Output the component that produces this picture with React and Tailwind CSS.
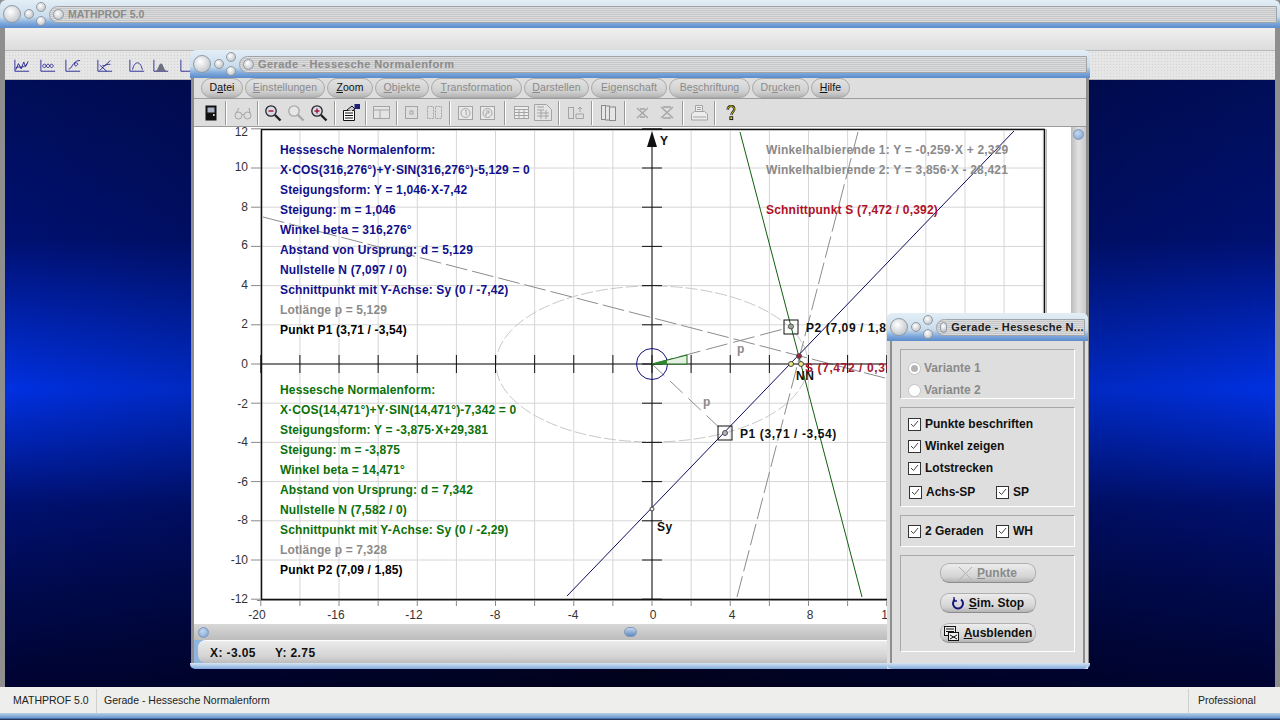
import React from 'react';

const font = "font-['Liberation_Sans',Arial,sans-serif]";

const list1 = [
  ['Hessesche Normalenform:', 'text-[#10108c]'],
  ['X·COS(316,276°)+Y·SIN(316,276°)-5,129 = 0', 'text-[#10108c]'],
  ['Steigungsform: Y = 1,046·X-7,42', 'text-[#10108c]'],
  ['Steigung: m = 1,046', 'text-[#10108c]'],
  ['Winkel beta = 316,276°', 'text-[#10108c]'],
  ['Abstand von Ursprung: d = 5,129', 'text-[#10108c]'],
  ['Nullstelle N (7,097 / 0)', 'text-[#10108c]'],
  ['Schnittpunkt mit Y-Achse: Sy (0 / -7,42)', 'text-[#10108c]'],
  ['Lotlänge p = 5,129', 'text-[#8a8a8a]'],
  ['Punkt P1 (3,71 / -3,54)', 'text-black'],
];

const list2 = [
  ['Hessesche Normalenform:', 'text-[#0a700a]'],
  ['X·COS(14,471°)+Y·SIN(14,471°)-7,342 = 0', 'text-[#0a700a]'],
  ['Steigungsform: Y = -3,875·X+29,381', 'text-[#0a700a]'],
  ['Steigung: m = -3,875', 'text-[#0a700a]'],
  ['Winkel beta = 14,471°', 'text-[#0a700a]'],
  ['Abstand von Ursprung: d = 7,342', 'text-[#0a700a]'],
  ['Nullstelle N (7,582 / 0)', 'text-[#0a700a]'],
  ['Schnittpunkt mit Y-Achse: Sy (0 / -2,29)', 'text-[#0a700a]'],
  ['Lotlänge p = 7,328', 'text-[#8a8a8a]'],
  ['Punkt P2 (7,09 / 1,85)', 'text-black'],
];

const menus = [
  { pre: 'D', u: 'a', post: 'tei', w: 'w-[42px]', on: true },
  { pre: '', u: 'E', post: 'instellungen', w: 'w-[80px]' },
  { pre: '', u: 'Z', post: 'oom', w: 'w-[46px]', on: true },
  { pre: '', u: 'O', post: 'bjekte', w: 'w-[54px]' },
  { pre: '', u: 'T', post: 'ransformation', w: 'w-[91px]' },
  { pre: '', u: 'D', post: 'arstellen', w: 'w-[65px]' },
  { pre: 'Ei', u: 'g', post: 'enschaft', w: 'w-[76px]' },
  { pre: 'Be', u: 's', post: 'chriftung', w: 'w-[81px]' },
  { pre: 'Dr', u: 'u', post: 'cken', w: 'w-[57px]' },
  { pre: '', u: 'H', post: 'ilfe', w: 'w-[39px]', on: true },
];

function Dot({ size }) {
  return <div className={`${size} rounded-full border border-[#8f9aa6] bg-[radial-gradient(circle_at_40%_35%,#ffffff,#c9ccd0_70%,#a8acb2)]`} />;
}

function TitleBar({ title, textClass }) {
  return (
    <div className="h-[28px] shrink-0 flex items-center pl-[3px] pr-[3px] rounded-t-[6px] bg-[linear-gradient(to_bottom,#e3eef6_0,#c9dcec_60%,#7fa9dc_82%,#5b8bcb_100%)]">
      <Dot size="w-[18px] h-[18px]" />
      <div className="ml-[3px] w-[10px] flex justify-center"><Dot size="w-[10px] h-[10px]" /></div>
      <div className="ml-[2px] flex flex-col gap-[4px]">
        <Dot size="w-[10px] h-[10px]" />
        <Dot size="w-[10px] h-[10px]" />
      </div>
      <div className="ml-[3px] flex-1 min-w-0 h-[17px] rounded-l-[9px] flex items-center pl-[3px] border border-[#a0a4a8] bg-[repeating-linear-gradient(to_bottom,#dcdcdc_0,#dcdcdc_1px,#c4c6c8_1px,#c4c6c8_2px)]">
        <Dot size="w-[11px] h-[11px]" />
        <span className={`ml-[4px] leading-none font-bold whitespace-nowrap ${textClass}`}>{title}</span>
      </div>
    </div>
  );
}

function Sep({ w }) {
  return (
    <div className={`${w} h-[24px] flex justify-center`}>
      <div className="w-[1px] bg-[#9a9a9a]" />
      <div className="w-[1px] bg-white" />
    </div>
  );
}

function Slot({ w, children }) {
  return <div className={`${w} h-[24px] flex items-center justify-center`}>{children}</div>;
}

function Magnifier({ sign, dim }) {
  const c = dim ? '#a8a8a8' : '#222';
  return (
    <svg width="18" height="18" viewBox="0 0 18 18" fill="none">
      <circle cx="7" cy="7" r="5.2" stroke={c} strokeWidth="1.3" fill={dim ? '#e6e6e6' : '#d9d9e8'} />
      <path d="M11 11l5.5 5.5" stroke={c} strokeWidth="2.4" />
      {sign !== 'none' && <path d="M4.5 7h5" stroke="#a01030" strokeWidth="1.4" />}
      {sign === 'plus' && <path d="M7 4.5v5" stroke="#a01030" strokeWidth="1.4" />}
    </svg>
  );
}

function Toolbar() {
  const g = '#a4a4a4';
  return (
    <div className="h-[29px] shrink-0 flex items-center pl-[6px] bg-[#dedede] border-y border-[#9c9c9c]">
      <Slot w="w-[22px]">
        <svg width="12" height="16" viewBox="0 0 12 16"><rect x="0.5" y="0.5" width="11" height="15" fill="#111" /><rect x="2.5" y="2.5" width="7" height="5" fill="#aab2c6" /><rect x="8" y="9" width="1.6" height="2" fill="#ddd" /></svg>
      </Slot>
      <Sep w="w-[8px]" />
      <Slot w="w-[26px]">
        <svg width="18" height="14" viewBox="0 0 18 14" fill="none" stroke={g}><ellipse cx="4.5" cy="9.5" rx="3.5" ry="3.5" /><ellipse cx="13.5" cy="9.5" rx="3.5" ry="3.5" /><path d="M8 9c.6-.8 1.4-.8 2 0M2 7L5 2M16 7l-1-5" /></svg>
      </Slot>
      <Sep w="w-[4px]" />
      <Slot w="w-[26px]"><Magnifier sign="minus" /></Slot>
      <Slot w="w-[20px]"><Magnifier sign="none" dim /></Slot>
      <Slot w="w-[26px]"><Magnifier sign="plus" /></Slot>
      <Sep w="w-[6px]" />
      <Slot w="w-[26px]">
        <svg width="18" height="17" viewBox="0 0 18 17" fill="none" stroke="#111"><path d="M1.5 6.5h11v10h-11z" fill="#fff" /><path d="M3 9h8M3 11.5h8M3 14h8" /><path d="M5 6l5-4 3 3-3 2" fill="#ccc" /><rect x="13" y="0.5" width="4.5" height="4" fill="#20207a" stroke="#20207a" /></svg>
      </Slot>
      <Sep w="w-[4px]" />
      <Slot w="w-[26px]">
        <svg width="17" height="13" viewBox="0 0 17 13" fill="#e4e4e4" stroke={g}><rect x="0.5" y="0.5" width="16" height="12" /><path d="M0.5 4h16M7 4v8.5" /></svg>
      </Slot>
      <Sep w="w-[6px]" />
      <Slot w="w-[22px]">
        <svg width="13" height="13" viewBox="0 0 13 13" fill="none" stroke={g}><rect x="0.5" y="0.5" width="12" height="12" /><rect x="5" y="5" width="3" height="3" /></svg>
      </Slot>
      <Slot w="w-[24px]">
        <svg width="15" height="13" viewBox="0 0 15 13" fill="none" stroke={g}><rect x="0.5" y="0.5" width="6" height="12" strokeDasharray="2 1" /><rect x="8.5" y="0.5" width="6" height="12" strokeDasharray="2 1" /></svg>
      </Slot>
      <Sep w="w-[8px]" />
      <Slot w="w-[23px]">
        <svg width="15" height="14" viewBox="0 0 15 14" fill="#e8e8e8" stroke={g}><rect x="0.5" y="0.5" width="14" height="13" /><circle cx="7.5" cy="7" r="4.5" /><path d="M7 4.5h1.2v5" fill="none" /></svg>
      </Slot>
      <Slot w="w-[20px]">
        <svg width="15" height="14" viewBox="0 0 15 14" fill="#e8e8e8" stroke={g}><rect x="0.5" y="0.5" width="14" height="13" /><circle cx="7.5" cy="7" r="4.5" /><path d="M6 5h3v2H6v3" fill="none" /></svg>
      </Slot>
      <Sep w="w-[16px]" />
      <Slot w="w-[16px]">
        <svg width="15" height="13" viewBox="0 0 15 13" fill="#eee" stroke={g}><rect x="0.5" y="0.5" width="14" height="12" /><path d="M0.5 3.5h14M0.5 6.5h14M0.5 9.5h14M5 3.5v9M10 3.5v9" /></svg>
      </Slot>
      <Slot w="w-[28px]">
        <svg width="18" height="17" viewBox="0 0 18 17" fill="#e4e4e4" stroke={g}><path d="M0.5 0.5h12l5 5v11H.5z" /><path d="M3 3h7M3 6h7M3 9h12M3 12h12M7 6v9M12 6v9" /></svg>
      </Slot>
      <Sep w="w-[4px]" />
      <Slot w="w-[30px]">
        <svg width="16" height="13" viewBox="0 0 16 13" fill="none" stroke={g}><rect x="0.5" y="1.5" width="5" height="11" /><path d="M8 8h7.5v4.5H8zM12 1v5M10 3l2-2 2 2" /></svg>
      </Slot>
      <Sep w="w-[2px]" />
      <Slot w="w-[30px]">
        <svg width="15" height="16" viewBox="0 0 15 16" fill="#e6e6e6" stroke="#8a8a8a"><rect x="0.5" y="0.5" width="4" height="14" /><rect x="4.5" y="1" width="4" height="14" /><rect x="8.5" y="2" width="6" height="13.5" /></svg>
      </Slot>
      <Sep w="w-[4px]" />
      <Slot w="w-[30px]">
        <svg width="13" height="12" viewBox="0 0 13 12" fill="none" stroke={g} strokeWidth="1.3"><path d="M1 1l11 10M12 1L1 11M4 2l5 0M4 10l5 0" /></svg>
      </Slot>
      <Slot w="w-[20px]">
        <svg width="14" height="13" viewBox="0 0 14 13" fill="none" stroke={g} strokeWidth="1.3"><path d="M1 1l12 11M13 1L1 12M3 1h8M3 12h8" /></svg>
      </Slot>
      <Sep w="w-[12px]" />
      <Slot w="w-[20px]">
        <svg width="17" height="16" viewBox="0 0 17 16" fill="#ececec" stroke={g}><path d="M4.5.5h7v6h-7zM.5 9l3-2.500h10l3 2.500v6h-16z" /><path d="M6 2.500h4M6 4.500h4M2 12h13" /></svg>
      </Slot>
      <Sep w="w-[12px]" />
      <Slot w="w-[20px]">
        <svg width="10" height="16" viewBox="0 0 10 17" fill="none"><path d="M1.500 5C1.500 2.500 3 1 5 1s3.500 1.500 3.500 3.500c0 2.500-3 3-3 6" stroke="#111" strokeWidth="2.400" /><path d="M1.500 5C1.500 2.500 3 1 5 1s3.500 1.500 3.500 3.500c0 2.500-3 3-3 6" stroke="#e8e020" strokeWidth="1" /><rect x="3.800" y="12.500" width="3" height="3" fill="#e8e020" stroke="#111" /></svg>
      </Slot>
    </div>
  );
}

function Chart() {
  const vx = [];
  for (let i = -20; i <= 20; i += 2) vx.push(653 + i * 19.56);
  const hy = [];
  for (let i = -12; i <= 12; i += 2) hy.push(364 - i * 19.6);
  const yLabels = [
    ['12', 136], ['10', 171], ['8', 211], ['6', 249], ['4', 289], ['2', 328], ['0', 368],
    ['-2', 408], ['-4', 446], ['-6', 486], ['-8', 524], ['-10', 564], ['-12', 603],
  ];
  const xLabels = [['-20', 258], ['-16', 337], ['-12', 415], ['-8', 496], ['-4', 574], ['0', 654], ['4', 733], ['8', 811], ['12', 889]];
  return (
    <div className="relative flex-1 min-w-0 bg-white overflow-hidden">
      <svg width="876" height="500" viewBox="195 127 876 500" className="block">
        {vx.map((x, i) => <line key={i} x1={x} y1="131" x2={x} y2="599" stroke="#d6d6d6" />)}
        {hy.map((y, i) => <line key={i} x1="262" y1={y} x2="1045" y2={y} stroke="#d6d6d6" />)}
        <path d="M262.500 129.500H1045.500V599.500H262.500Z" fill="none" stroke="#111" strokeWidth="1.500" />
        <path d="M1047.500 129V600" stroke="#bbb" />
        <path d="M258 600.500H1046" stroke="#888" />
        {vx.map((x, i) => <line key={i} x1={x} y1="600" x2={x} y2="606" stroke="#888" />)}
        {hy.map((y, i) => <line key={i} x1="252" y1={y} x2="262" y2={y} stroke="#888" />)}

        <ellipse cx="653" cy="364" rx="156" ry="78" fill="none" stroke="#c8c8c8" strokeDasharray="12 3" />
        <line x1="264" y1="217" x2="886" y2="378" stroke="#8c8c8c" strokeDasharray="22 5" />
        <line x1="859" y1="132" x2="738" y2="597" stroke="#8c8c8c" strokeDasharray="22 5" />
        <line x1="653" y1="364" x2="792" y2="327" stroke="#8c8c8c" strokeDasharray="22 6" />
        <line x1="653" y1="364" x2="726" y2="433" stroke="#8c8c8c" strokeDasharray="17 8" />

        <line x1="262" y1="364" x2="1045" y2="364" stroke="#111" />
        <line x1="653" y1="140" x2="653" y2="600" stroke="#111" />
        <path d="M653 131l5 16h-10z" fill="#111" />
        {hy.map((y, i) => <line key={i} x1="643" y1={y} x2="663" y2={y} stroke="#111" />)}
        {vx.map((x, i) => <line key={i} x1={x} y1="355" x2={x} y2="373" stroke="#111" />)}

        <line x1="568" y1="596" x2="1015" y2="131" stroke="#0a0a60" />
        <line x1="741" y1="132" x2="863" y2="597" stroke="#0f5f0f" />

        <circle cx="653" cy="364" r="15.500" fill="none" stroke="#14147e" />
        <path d="M653 364L688 355V364Z" fill="#e4f0e0" stroke="#1a6a1a" />
        <path d="M653 364L668 360V364Z" fill="#2b8a2b" />

        <rect x="785" y="320" width="14" height="14" fill="none" stroke="#111" />
        <circle cx="792" cy="326.500" r="2.500" fill="#9aa69a" stroke="#555" />
        <rect x="719" y="426" width="14" height="14" fill="none" stroke="#111" />
        <circle cx="726" cy="433" r="2.500" fill="#b0b0c0" stroke="#555" />
        <circle cx="800" cy="356" r="2.500" fill="#a02040" stroke="#555" />
        <circle cx="792" cy="364" r="2.500" fill="#f0e880" stroke="#444" />
        <circle cx="802" cy="364" r="2.500" fill="#f0e880" stroke="#444" />
        <circle cx="653" cy="509" r="2" fill="#eee" stroke="#444" />

        <g fontFamily="'Liberation Sans',Arial,sans-serif" fontSize="12" fill="#333">
          {yLabels.map(([t, y]) => <text key={t} x="249" y={y} textAnchor="end">{t}</text>)}
          {xLabels.map(([t, x]) => <text key={t} x={x} y="619" textAnchor="middle">{t}</text>)}
        </g>
        <g fontFamily="'Liberation Sans',Arial,sans-serif" fontSize="12" fontWeight="700" letterSpacing="0.600">
          <text x="661" y="145" fill="#111">Y</text>
          <text x="807" y="332" fill="#111">P2 (7,09 / 1,85)</text>
          <text x="741" y="438" fill="#111">P1 (3,71 / -3,54)</text>
          <text x="797" y="380" fill="#111">NN</text>
          <text x="658" y="531" fill="#111">Sy</text>
          <text x="806" y="372" fill="#a81830">S (7,472 / 0,392)</text>
          <text x="738" y="353" fill="#8a8a8a">p</text>
          <text x="704" y="406" fill="#8a8a8a">p</text>
        </g>
      </svg>
      <InfoList items={list1} className="top-[13px] left-[86px]" />
      <InfoList items={list2} className="top-[253px] left-[86px]" />
      <div className="absolute top-[13px] left-[572px] flex flex-col text-[12px] leading-[20px] font-bold tracking-[0.2px] whitespace-nowrap">
        <span className="text-[#8a8a8a]">Winkelhalbierende 1: Y = -0,259·X + 2,329</span>
        <span className="text-[#8a8a8a]">Winkelhalbierende 2: Y = 3,856·X - 28,421</span>
        <span className="mt-[20px] text-[#b01028]">Schnittpunkt S (7,472 / 0,392)</span>
      </div>
    </div>
  );
}

function InfoList({ items, className }) {
  return (
    <div className={`absolute ${className} flex flex-col text-[12px] leading-[20px] font-bold tracking-[0.15px] whitespace-nowrap`}>
      {items.map(([t, c], i) => <span key={i} className={c}>{t}</span>)}
    </div>
  );
}

function Check({ label, className = '' }) {
  return (
    <div className={`flex items-center h-[22px] ${className}`}>
      <div className="w-[13px] h-[13px] border border-[#333] bg-white flex items-center justify-center shrink-0">
        <svg width="9" height="8" viewBox="0 0 9 8" fill="none"><path d="M1 4l2.500 2.500L8 1" stroke="#444" /></svg>
      </div>
      <span className="ml-[4px] text-[12px] font-bold text-[#111] whitespace-nowrap">{label}</span>
    </div>
  );
}

function Radio({ label, checked }) {
  return (
    <div className="flex items-center h-[22px]">
      <div className="w-[13px] h-[13px] rounded-full border border-[#c4c4c4] bg-white flex items-center justify-center">
        {checked && <div className="w-[7px] h-[7px] rounded-full bg-[#b4b4b4]" />}
      </div>
      <span className="ml-[3px] text-[12px] font-bold text-[#8a8a8a]">{label}</span>
    </div>
  );
}

function Group({ className, children }) {
  return <div className={`border border-[#a8a8a8] border-r-white border-b-white pl-[7px] ${className}`}>{children}</div>;
}

function PillButton({ icon, pre, u, dim }) {
  return (
    <div className="w-[96px] h-[20px] rounded-[9px] border border-[#b0b0b0] border-b-[#8c8c8c] flex items-center justify-center bg-[linear-gradient(to_bottom,#ececec,#d4d4d4_70%,#b4b4b4)]">
      {icon}
      <span className={`ml-[4px] text-[12px] font-bold ${dim ? 'text-[#8a8a8a]' : 'text-[#111]'}`}>
        <span className="underline">{pre}</span>{u}
      </span>
    </div>
  );
}

function SmallWindow() {
  return (
    <div className={`absolute left-[887px] top-[313px] w-[201px] h-[356px] flex flex-col bg-[#dedede] rounded-t-[6px] ${font}`}>
      <TitleBar title="Gerade - Hessesche N..." textClass="text-[11px] text-[#1c1c1c] tracking-[0.32px]" />
      <div className="flex-1 min-h-0 mx-[3px] px-[8px] pt-[8px] flex flex-col gap-[8px] border-x-[2px] border-[#8e8e8e] bg-[#dedede]">
        <Group className="h-[50px] pt-[7px]">
          <Radio label="Variante 1" checked />
          <Radio label="Variante 2" />
        </Group>
        <Group className="h-[100px] pt-[5px]">
          <Check label="Punkte beschriften" />
          <Check label="Winkel zeigen" />
          <Check label="Lotstrecken" />
          <div className="mt-[2px] flex">
            <Check label="Achs-SP" className="ml-[1px] w-[87px]" />
            <Check label="SP" />
          </div>
        </Group>
        <Group className="h-[32px] pt-[4px] flex">
          <Check label="2 Geraden" className="w-[88px]" />
          <Check label="WH" />
        </Group>
        <div className="h-[97px] border border-[#a8a8a8] border-r-white border-b-white pt-[7px] flex flex-col items-center gap-[10px]">
          <PillButton dim pre="P" u="unkte" icon={<svg width="15" height="15" viewBox="0 0 15 15" fill="none" stroke="#b0b0b0"><path d="M1 1l13 13M14 1L1 14" /></svg>} />
          <PillButton pre="S" u="im. Stop" icon={<svg width="14" height="14" viewBox="0 0 14 14" fill="none" stroke="#14147e" strokeWidth="2"><path d="M4 3.500A5 5 0 1 0 10 3.500" /><path d="M3 1v4h3" strokeWidth="1.300" /></svg>} />
          <PillButton pre="A" u="usblenden" icon={<svg width="17" height="16" viewBox="0 0 17 16" fill="#eee" stroke="#111"><rect x="1.500" y="1.500" width="11" height="9" /><path d="M3 4h8M3 6.500h8" /><rect x="5.500" y="7.500" width="10" height="8" /><path d="M7 10l7 4M14 10l-7 4" /></svg>} />
        </div>
      </div>
      <div className="h-[6px] shrink-0 rounded-b-[5px] bg-[linear-gradient(to_bottom,#d6e5f2,#7fa9dc)]" />
    </div>
  );
}

function ChildWindow() {
  return (
    <div className={`absolute left-[190px] top-[50px] w-[900px] h-[619px] flex flex-col ${font}`}>
      <TitleBar title="Gerade - Hessesche Normalenform" textClass="text-[11px] text-[#8b8b8b] tracking-[0.42px]" />
      <div className="flex-1 min-h-0 flex flex-col mx-[1px] border-x-[3px] border-[#8e8e8e] bg-[#dedede]">
        <div className="h-[20px] shrink-0 flex items-center gap-[2px] pl-[7px]">
          {menus.map((m, i) => (
            <div key={i} className={`${m.w} h-[20px] rounded-[10px] border border-[#a8a8a8] flex items-center justify-center bg-[linear-gradient(to_bottom,#e2e2e2,#d0d0d0_70%,#b4b4b4)] text-[10.5px] tracking-[0.1px] whitespace-nowrap ${m.on ? 'text-[#111]' : 'text-[#8a8a8a]'}`}>
              {m.pre}<span className="underline">{m.u}</span>{m.post}
            </div>
          ))}
        </div>
        <Toolbar />
        <div className="flex-1 min-h-0 flex flex-col">
          <div className="flex-1 min-h-0 flex">
            <Chart />
            <div className="w-[15px] shrink-0 bg-[linear-gradient(to_right,#bcbcbc,#e2e2e2_50%,#c8c8c8)] flex flex-col items-center pt-[2px]">
              <div className="w-[11px] h-[11px] rounded-full border border-[#7e98b8] bg-[radial-gradient(circle_at_40%_35%,#c4d8ee,#7ba0cf)]" />
            </div>
          </div>
          <div className="h-[16px] shrink-0 flex items-center bg-[linear-gradient(to_bottom,#d8d8d8,#bdbdbd)]">
            <div className="ml-[4px] w-[11px] h-[11px] rounded-full border border-[#7e98b8] bg-[radial-gradient(circle_at_40%_35%,#c4d8ee,#7ba0cf)]" />
            <div className="ml-[415px] w-[13px] h-[10px] rounded-full border border-[#7e98b8] bg-[linear-gradient(to_bottom,#c4d8ee,#5f89bf)]" />
          </div>
          <div className="h-[23px] shrink-0 flex items-center bg-[#8fb4de]">
            <div className="flex-1 h-full ml-[4px] flex items-center pl-[12px] pt-[2px] rounded-l-[8px] border-t border-white bg-[linear-gradient(to_bottom,#ebebeb,#d4d4d4_70%,#bcbcbc)] text-[12px] font-bold tracking-[0.4px] text-[#111]">
              <span>X: -3.05</span>
              <span className="ml-[19px]">Y: 2.75</span>
            </div>
          </div>
        </div>
      </div>
      <div className="h-[6px] shrink-0 rounded-b-[5px] bg-[linear-gradient(to_bottom,#d6e5f2,#7fa9dc)]" />
    </div>
  );
}

function MainIcons() {
  const c = '#14148a';
  const items = [
    ['w-[26px]', <path key="a" d="M1 1v15h16M2 14l3-8 3 7 3-9 2 6 3-7M2 12c4-4 8 2 13-6" />],
    ['w-[26px]', <path key="b" d="M1 1v15h16M3 9c1-3 3-3 4 0s3 3 4 0 3-3 4 0c-1 3-3 3-4 0s-3-3-4 0-3 3-4 0" />],
    ['w-[24px]', <path key="c" d="M1 1v15h16M4 13c4 0 4-8 8-8s2 4 0 4-3-7 5-7" />],
    ['w-[40px]', <path key="d" d="M1 1v15h16M3 15L15 2M3 8l8 8M6 9c3 0 6-3 9-2" />],
    ['w-[24px]', <path key="e" d="M1 1v15h16M4 14c2-12 9-12 11 0" />],
    ['w-[24px]', <g key="f"><path d="M1 1v15h16" /><path d="M2 16c4 0 4-10 7-10s3 10 7 10z" fill="#6f6f80" stroke="none" /></g>],
    ['w-[30px]', <path key="g" d="M1 1v15h16" />],
  ];
  return (
    <div className="h-[30px] shrink-0 mx-[5px] flex items-center pl-[4px] border-y border-[#b8b8b8] bg-[#e6e6e6] bg-[radial-gradient(#d2d2d2_0.6px,transparent_0.7px)] bg-[size:3px_3px]">
      {items.map(([w, p], i) => (
        <div key={i} className={`${w} flex justify-center`}>
          <svg width="16" height="13" viewBox="0 0 18 17" preserveAspectRatio="none" fill="none" stroke={c}>{p}</svg>
        </div>
      ))}
    </div>
  );
}

export default function App() {
  return (
    <div className={`relative w-[1280px] h-[720px] overflow-hidden flex flex-col bg-[#8e8e8e] ${font}`}>
      <TitleBar title="MATHPROF 5.0" textClass="text-[10.5px] text-[#8b8b8b]" />
      <div className="h-[22px] shrink-0 mx-[5px] bg-[linear-gradient(to_bottom,#f0f0f0,#dcdcdc)]" />
      <MainIcons />
      <div className="flex-1 min-h-0 mx-[5px] bg-[linear-gradient(to_right,transparent,rgba(0,0,0,0.45)_50%,transparent),linear-gradient(to_bottom,#000d58_0%,#001070_26%,#0020a8_38%,#0030e0_51%,#0020a8_61%,#001070_70%,#000a50_83%,#000330_100%)]" />
      <div className="h-[26px] shrink-0 flex items-center pt-[2px] bg-[#eeeeec] text-[10.5px] text-[#222]">
        <span className="ml-[13px] w-[83px]">MATHPROF 5.0</span>
        <div className="w-[1px] h-full bg-[#d0d0cc]" />
        <span className="ml-[7px] flex-1">Gerade - Hessesche Normalenform</span>
        <div className="w-[1px] h-full bg-[#d0d0cc]" />
        <span className="ml-[9px] w-[82px]">Professional</span>
      </div>
      <div className="h-[7px] shrink-0 bg-[linear-gradient(to_bottom,#b8d0e8,#6c98d0_70%,#0a1a40)]" />
      <ChildWindow />
      <SmallWindow />
    </div>
  );
}
